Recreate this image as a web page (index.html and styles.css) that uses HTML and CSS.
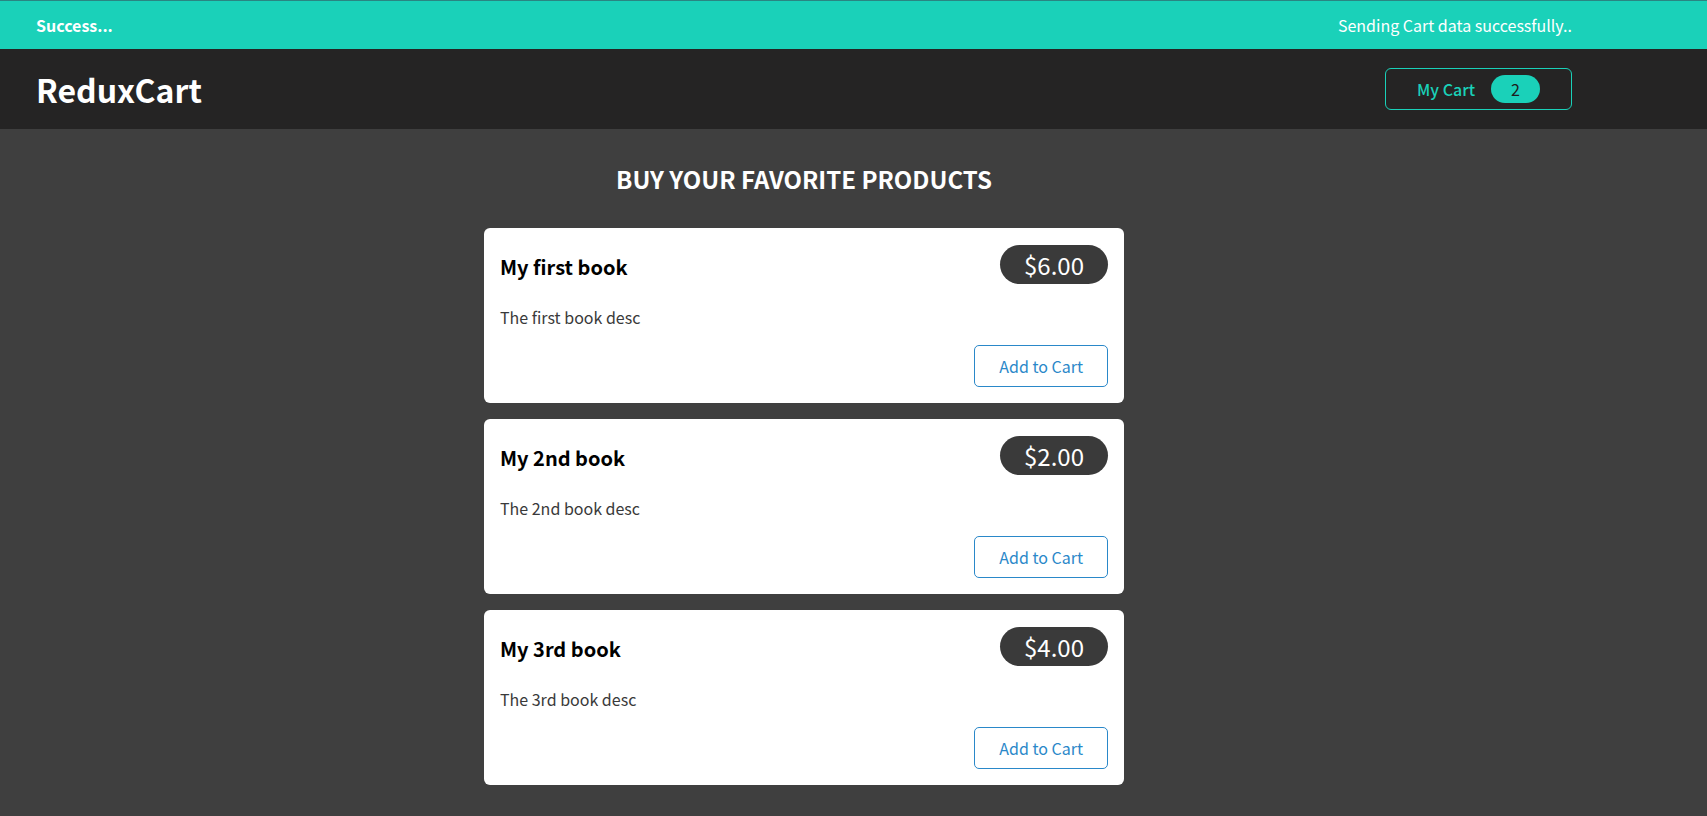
FILE: index.html
```html
<!DOCTYPE html>
<html lang="en">
<head>
<meta charset="utf-8">
<title>ReduxCart</title>
<link rel="stylesheet" href="styles.css">
</head>
<body>
<section class="notification success">
  <h2>Success...</h2>
  <p>Sending Cart data successfully..</p>
</section>
<header class="header">
  <h1>ReduxCart</h1>
  <button class="cart-button"><span>My Cart</span><span class="badge">2</span></button>
</header>
<main class="page">
  <section class="products">
    <h2>Buy your favorite products</h2>
    <ul class="product-list">
      <li class="card item">
        <header class="item-head">
          <h3>My first book</h3>
          <div class="price">$6.00</div>
        </header>
        <p>The first book desc</p>
        <div class="actions"><button class="add">Add to Cart</button></div>
      </li>
      <li class="card item">
        <header class="item-head">
          <h3>My 2nd book</h3>
          <div class="price">$2.00</div>
        </header>
        <p>The 2nd book desc</p>
        <div class="actions"><button class="add">Add to Cart</button></div>
      </li>
      <li class="card item">
        <header class="item-head">
          <h3>My 3rd book</h3>
          <div class="price">$4.00</div>
        </header>
        <p>The 3rd book desc</p>
        <div class="actions"><button class="add">Add to Cart</button></div>
      </li>
    </ul>
  </section>
</main>
</body>
</html>
```
FILE: styles.css
```css
* { box-sizing: border-box; }

html { font-family: "Noto Sans CJK JP", "Noto Sans", sans-serif; }

body {
  margin: 0;
  background-color: #3f3f3f;
}

.notification {
  height: 49px;
  border-top: 1px solid #2a8582;
  display: flex;
  justify-content: space-between;
  align-items: center;
  padding: 0 135px 0 36px;
  color: #fff;
}
.success { background-color: #1ad1b9; }
.notification h2,
.notification p {
  font-size: 16px;
  margin: 0;
}
.notification h2 { font-weight: 700; }
.notification p { font-weight: 400; }

.header {
  height: 80px;
  background-color: #252424;
  display: flex;
  justify-content: space-between;
  align-items: center;
  padding: 0 135px 0 36px;
}
.header h1 {
  margin: 0;
  color: #fff;
  font-size: 32px;
  font-weight: 700;
}

.cart-button {
  font: inherit;
  width: 187px;
  background: transparent;
  border: 1px solid #1ad1b9;
  border-radius: 6px;
  color: #1ad1b9;
  padding: 6px 0;
  display: flex;
  justify-content: center;
  align-items: center;
  font-weight: 500;
  font-size: 16px;
}
.badge {
  background-color: #1ad1b9;
  border-radius: 30px;
  padding: 2.4px 20px;
  color: #1d1d1d;
  margin-left: 16px;
  font-weight: 400;
}

.page { width: 1608px; }

.products h2 {
  color: #fff;
  margin: 32px auto;
  text-align: center;
  text-transform: uppercase;
  font-size: 24px;
  font-weight: 700;
}

.product-list {
  list-style: none;
  margin: 0;
  padding: 0;
}

.card {
  background-color: #fff;
  border-radius: 6px;
  padding: 16px;
  width: 640px;
  margin: 16px auto;
}

.item-head {
  display: flex;
  justify-content: space-between;
  align-items: baseline;
}
.item h3 {
  margin: 8px 0;
  font-size: 20px;
  font-weight: 700;
  color: #000;
}
.price {
  font-size: 24px;
  background-color: #3a3a3a;
  border-radius: 30px;
  padding: 2.4px 24px;
  color: #fff;
}
.item p {
  margin: 16px 0;
  font-size: 16px;
  color: #3a3a3a;
}
.actions {
  display: flex;
  justify-content: flex-end;
}
.add {
  font: inherit;
  font-size: 16px;
  background: transparent;
  border: 1px solid #2a88c9;
  border-radius: 5px;
  color: #2a88c9;
  padding: 8px 24px;
}
```
